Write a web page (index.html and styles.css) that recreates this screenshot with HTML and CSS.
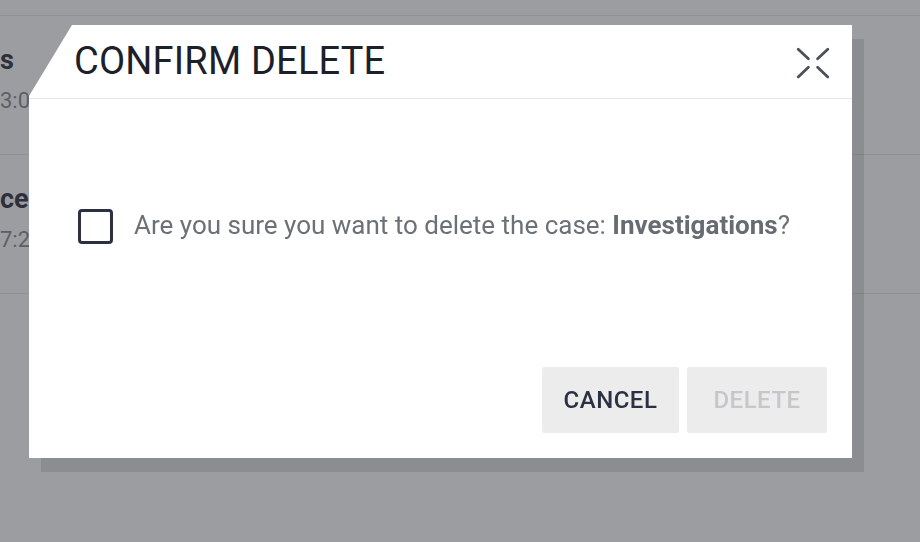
FILE: index.html
```html
<!DOCTYPE html>
<html>
<head>
<meta charset="utf-8">
<link rel="stylesheet" href="styles.css">
</head>
<body>
<div class="page">
  <div class="list">
    <div class="row">
      <div class="row-title">s</div>
      <div class="row-time">3:00 PM</div>
    </div>
    <div class="row">
      <div class="row-title">ce</div>
      <div class="row-time">7:20 PM</div>
    </div>
  </div>
</div>
<div class="overlay">
  <div class="dialog-wrap">
    <div class="dialog">
      <div class="dialog-header">
        <h1 class="dialog-title">CONFIRM DELETE</h1>
        <button class="close-btn" aria-label="Close">
          <svg width="34" height="32" viewBox="0 0 34 32">
            <g stroke="#4b5059" stroke-width="2.8" stroke-linecap="round" fill="none">
              <line x1="2.2" y1="2.2" x2="12.4" y2="11.8"/>
              <line x1="31.8" y1="2.2" x2="21.6" y2="11.8"/>
              <line x1="12.4" y1="20.3" x2="2.2" y2="29.9"/>
              <line x1="21.6" y1="20.3" x2="31.8" y2="29.9"/>
            </g>
          </svg>
        </button>
      </div>
      <div class="dialog-body">
        <label class="confirm-row">
          <span class="checkbox"></span>
          <span class="confirm-text">Are you sure you want to delete the case: <b>Investigations</b>?</span>
        </label>
      </div>
      <div class="dialog-footer">
        <button class="btn btn-cancel">CANCEL</button>
        <button class="btn btn-delete" disabled>DELETE</button>
      </div>
    </div>
  </div>
</div>
</body>
</html>
```

FILE: styles.css
```css
* { box-sizing: border-box; }
html, body {
  margin: 0;
  padding: 0;
  width: 920px;
  height: 542px;
  overflow: hidden;
  font-family: Roboto, "Liberation Sans", sans-serif;
  background: #ffffff;
}
.page {
  width: 920px;
  height: 542px;
  padding-top: 15px;
}
.list {
  border-top: 1px solid #e6e6e8;
}
.row {
  height: 139px;
  border-bottom: 1px solid #e6e6e8;
  padding-top: 26px;
}
.row-title {
  font-size: 27px;
  font-weight: 700;
  color: #1f2430;
  line-height: 36px;
}
.row-time {
  font-size: 22px;
  color: #80838a;
  line-height: 28px;
  margin-top: 9px;
}
.overlay {
  position: absolute;
  inset: 0;
  background: rgba(57, 59, 67, 0.5);
  padding: 25px 0 0 29px;
}
.dialog-wrap {
  width: 823px;
  filter: drop-shadow(12px 14px 0 rgba(0, 0, 0, 0.1));
}
.dialog {
  width: 823px;
  height: 433px;
  background: #ffffff;
  clip-path: polygon(43px 0, 100% 0, 100% 100%, 0 100%, 0 71px);
  display: flex;
  flex-direction: column;
}
.dialog-header {
  height: 74px;
  border-bottom: 1px solid #e8e8ea;
  display: flex;
  align-items: center;
  justify-content: space-between;
  padding: 0 22px 0 45px;
}
.dialog-title {
  margin: 0;
  font-size: 38px;
  font-weight: 400;
  color: #1c2129;
  letter-spacing: 0.2px;
  line-height: 44px;
  padding-bottom: 1px;
}
.close-btn {
  border: 0;
  background: none;
  padding: 0;
  margin: 3px 0 0 0;
  width: 34px;
  height: 32px;
  display: block;
}
.close-btn svg { display: block; }
.dialog-body {
  flex: 1;
  padding: 110px 0 0 49px;
}
.confirm-row {
  display: flex;
  align-items: center;
  gap: 21px;
}
.checkbox {
  width: 35px;
  height: 35px;
  border: 3px solid #2b3142;
  border-radius: 4px;
  flex: none;
}
.confirm-text {
  font-size: 26px;
  color: #6c7177;
  line-height: 30px;
  margin-top: -3px;
}
.confirm-text b {
  font-weight: 700;
  color: #676c72;
}
.dialog-footer {
  display: flex;
  justify-content: flex-end;
  gap: 8px;
  padding: 0 25px 25px 0;
}
.btn {
  height: 66px;
  border: 0;
  border-radius: 2px;
  background: #ececec;
  font-family: Roboto, "Liberation Sans", sans-serif;
  font-weight: 500;
  font-size: 24px;
  letter-spacing: 0.5px;
  padding: 0;
}
.btn-cancel {
  width: 137px;
  color: #2b3142;
}
.btn-delete {
  width: 140px;
  color: #c6c7ca;
}
```
